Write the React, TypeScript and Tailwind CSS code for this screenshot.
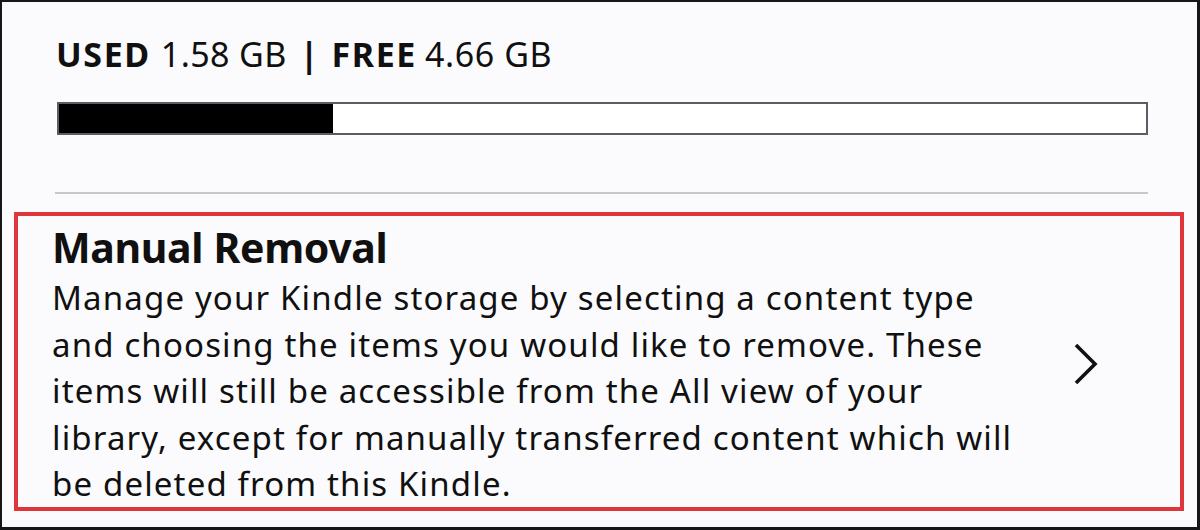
import React from "react";

const font = { fontFamily: '"Noto Sans", "Open Sans", sans-serif' };

export default function App() {
  const lines = [
    "Manage your Kindle storage by selecting a content type",
    "and choosing the items you would like to remove. These",
    "items will still be accessible from the All view of your",
    "library, except for manually transferred content which will",
    "be deleted from this Kindle.",
  ];
  return (
    <div
      className="w-[1200px] h-[530px] bg-[#fbfbfd] border-t-2 border-l-2 border-r-[3px] border-b-[3px] border-[#161618] text-[#101010] flex flex-col"
      style={font}
    >
      <div className="pl-[53px] pr-[49px] pt-[30px]">
        <div className="text-[34px] leading-[44px] flex items-baseline whitespace-nowrap">
          <span className="font-bold tracking-[1.6px] ml-[1px]">USED</span>
          <span className="tracking-[0.4px] ml-[10px]">1.58 GB</span>
          <span className="font-bold ml-[13px]">|</span>
          <span className="font-bold tracking-[1.6px] ml-[13px]">FREE</span>
          <span className="tracking-[0.6px] ml-[8px]">4.66 GB</span>
        </div>
        <div className="mt-[26px] ml-[2px] h-[33px] border-2 border-[#5c5c62] bg-white">
          <div className="h-full bg-black w-[274px]" />
        </div>
        <div className="mt-[57px] h-[2px] bg-[#c5c8cc]" />
      </div>
      <div className="mt-[18px] ml-[12px] w-[1170px] h-[299px] border-4 border-[#df363c] flex">
        <div className="flex-1 pl-[34px] pt-[7px]">
          <div className="text-[41px] leading-[48px] font-bold tracking-[-0.35px]">Manual Removal</div>
          <div className="text-[33px] leading-[46.5px] tracking-[1.15px] mt-[4px] whitespace-nowrap">
            {lines.map((l) => (
              <div key={l}>{l}</div>
            ))}
          </div>
        </div>
        <div className="shrink-0 self-center mt-[5px] pr-[80px]">
          <svg width="28" height="44" viewBox="0 0 28 44" fill="none" className="block">
            <path d="M4 3 L23 22 L4 41" stroke="#111" strokeWidth="3.6" strokeLinecap="butt" strokeLinejoin="miter" />
          </svg>
        </div>
      </div>
    </div>
  );
}
